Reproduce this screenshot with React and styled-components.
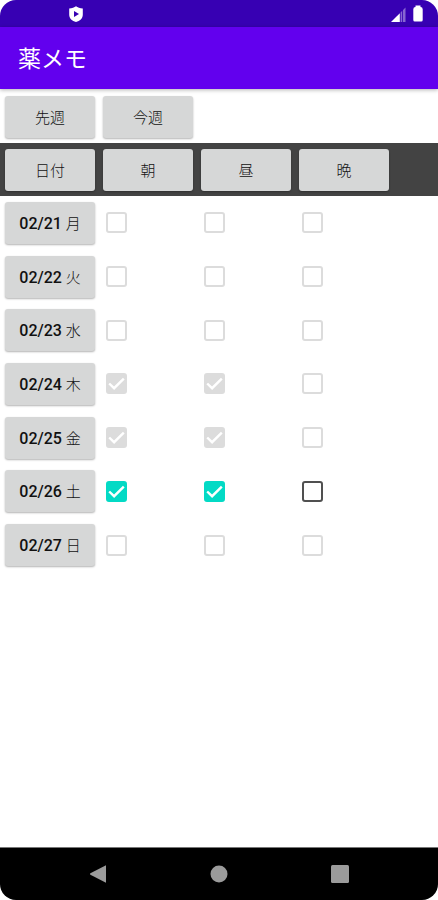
import { useState } from "react";
import styled, { createGlobalStyle } from "styled-components";

const GlobalStyle = createGlobalStyle`
  * {
    box-sizing: border-box;
  }
  body {
    margin: 0;
    background-color: #ffffff;
    font-family: Roboto, "Noto Sans CJK JP", sans-serif;
  }
`;

const Phone = styled.div`
  display: flex;
  flex-direction: column;
  min-height: 100vh;
  border-radius: 16px;
  overflow: hidden;
  background-color: #ffffff;
`;

const StatusBar = styled.div`
  display: flex;
  justify-content: space-between;
  align-items: center;
  height: 27px;
  padding: 0 15px 0 68px;
  background-color: #3700b3;
`;

const StatusIcons = styled.div`
  display: flex;
  align-items: flex-end;
  gap: 7px;
`;

const AppBar = styled.header`
  display: flex;
  align-items: center;
  height: 62px;
  padding: 4px 18px 0;
  background-color: #6200ee;
  color: #ffffff;
  box-shadow: 0 1px 4px rgba(0, 0, 0, 0.3);
`;

const Title = styled.h1`
  margin: 0;
  font-size: 23px;
  line-height: 32px;
  font-weight: 400;
`;

const WeekNav = styled.nav`
  display: flex;
  gap: 8px;
  padding: 7px 5px 5px;
`;

const Button = styled.button`
  display: block;
  width: 90px;
  height: 42px;
  padding: 2px 0 0;
  border: none;
  border-radius: 3px;
  background-color: #d6d7d7;
  box-shadow: 0 1px 2px rgba(0, 0, 0, 0.3);
  color: #111111;
  font-family: inherit;
  font-size: 15px;
  font-weight: 300;
  line-height: 24px;
  white-space: nowrap;
  cursor: pointer;
`;

const DateText = styled.span`
  font-size: 16px;
  font-weight: 500;
`;

const MemoTable = styled.table`
  width: 100%;
  height: 429px;
  table-layout: fixed;
  border-collapse: collapse;
`;

const HeadRow = styled.tr`
  height: 53px;
  background-color: #434343;
`;

const HeadCell = styled.th`
  width: ${(props) => (props.$last ? "auto" : "98px")};
  padding: 0 0 0 5px;
  text-align: left;
`;

const RowHead = styled.th`
  padding: 0 0 0 5px;
  text-align: left;
`;

const Cell = styled.td`
  padding: 0 0 0 8px;
`;

const CheckLabel = styled.label`
  display: grid;
  width: 21px;
  height: 21px;
`;

const CheckInput = styled.input`
  grid-area: 1 / 1;
  appearance: none;
  width: 21px;
  height: 21px;
  margin: 0;
  border: 2px solid #505050;
  border-radius: 3px;
  background-color: #ffffff;

  &:checked {
    border-color: #03dac5;
    background-color: #03dac5;
  }
  &:disabled {
    border-color: #dcdcdc;
  }
  &:disabled:checked {
    background-color: #dcdcdc;
  }
`;

const CheckMark = styled.svg`
  grid-area: 1 / 1;
  width: 21px;
  height: 21px;
  pointer-events: none;
`;

const NavBar = styled.footer`
  display: flex;
  justify-content: center;
  align-items: center;
  gap: 98px;
  height: 53px;
  margin-top: auto;
  border-top: 1px solid #777777;
  background-color: #000000;
`;

const NavButton = styled.button`
  display: flex;
  justify-content: center;
  align-items: center;
  width: 23px;
  height: 24px;
  padding: 0;
  border: none;
  background: none;
  cursor: pointer;
`;

const times = ["朝", "昼", "晩"];

const initialDays = [
  { date: "02/21", day: "月", taken: [false, false, false] },
  { date: "02/22", day: "火", taken: [false, false, false] },
  { date: "02/23", day: "水", taken: [false, false, false] },
  { date: "02/24", day: "木", taken: [true, true, false] },
  { date: "02/25", day: "金", taken: [true, true, false] },
  { date: "02/26", day: "土", taken: [true, true, false], today: true },
  { date: "02/27", day: "日", taken: [false, false, false] },
];

function Check({ label, checked, disabled, onChange }) {
  return (
    <CheckLabel>
      <CheckInput
        type="checkbox"
        aria-label={label}
        checked={checked}
        disabled={disabled}
        onChange={onChange}
      />
      {checked && (
        <CheckMark viewBox="0 0 21 21" aria-hidden="true">
          <path
            d="M3.2 10.5 L8.1 15.2 L17.8 5.6"
            fill="none"
            stroke="#ffffff"
            strokeWidth="2.4"
          />
        </CheckMark>
      )}
    </CheckLabel>
  );
}

export default function App() {
  const [days, setDays] = useState(initialDays);

  const toggle = (date, index) => {
    setDays(
      days.map((d) =>
        d.date === date
          ? { ...d, taken: d.taken.map((t, i) => (i === index ? !t : t)) }
          : d
      )
    );
  };

  return (
    <>
      <GlobalStyle />
      <Phone>
        <StatusBar>
          <svg width="16" height="16" viewBox="0 0 16 16">
            <path
              d="M8 0.3 C9.6 1.5 12 2.3 14.8 2.5 V8.4 C14.8 12.4 11.8 15 8 15.9 C4.2 15 1.2 12.4 1.2 8.4 V2.5 C4 2.3 6.4 1.5 8 0.3 Z"
              fill="#ffffff"
            />
            <path d="M6 5 L11 8 L6 11 Z" fill="#3700b3" />
          </svg>
          <StatusIcons>
            <svg width="15" height="15" viewBox="0 0 15 15">
              <path
                d="M9.6 5.4 L11.2 3.8 V15 H9.6 Z M12 3 L14.5 0.5 V15 H12 Z"
                fill="#ffffff"
                opacity="0.4"
              />
              <path d="M8.8 6.2 V15 H0 Z" fill="#ffffff" />
            </svg>
            <svg width="10" height="17" viewBox="0 0 10 17">
              <path
                d="M2.5 2 V0.5 H7.5 V2 Q9.7 2 9.7 4.2 V15 Q9.7 16.5 8.2 16.5 H1.8 Q0.3 16.5 0.3 15 V4.2 Q0.3 2 2.5 2 Z"
                fill="#ffffff"
              />
            </svg>
          </StatusIcons>
        </StatusBar>
        <AppBar>
          <Title>薬メモ</Title>
        </AppBar>
        <WeekNav>
          <Button>先週</Button>
          <Button>今週</Button>
        </WeekNav>
        <MemoTable>
          <thead>
            <HeadRow>
              <HeadCell>
                <Button>日付</Button>
              </HeadCell>
              {times.map((time, i) => (
                <HeadCell key={time} $last={i === times.length - 1}>
                  <Button>{time}</Button>
                </HeadCell>
              ))}
            </HeadRow>
          </thead>
          <tbody>
            {days.map((d) => (
              <tr key={d.date}>
                <RowHead scope="row">
                  <Button>
                    <DateText>{d.date}</DateText> {d.day}
                  </Button>
                </RowHead>
                {d.taken.map((taken, i) => (
                  <Cell key={times[i]}>
                    <Check
                      label={`${d.date} ${times[i]}`}
                      checked={taken}
                      disabled={!d.today}
                      onChange={() => toggle(d.date, i)}
                    />
                  </Cell>
                ))}
              </tr>
            ))}
          </tbody>
        </MemoTable>
        <NavBar>
          <NavButton aria-label="戻る">
            <svg width="18" height="20" viewBox="0 0 18 20">
              <path
                d="M17 1.2 V18.8 L1.4 10.8 Q0.4 10 1.4 9.2 Z"
                fill="#9b9b9b"
              />
            </svg>
          </NavButton>
          <NavButton aria-label="ホーム">
            <svg width="18" height="18" viewBox="0 0 18 18">
              <circle cx="9" cy="9" r="8.5" fill="#9b9b9b" />
            </svg>
          </NavButton>
          <NavButton aria-label="履歴">
            <svg width="18" height="18" viewBox="0 0 18 18">
              <rect width="18" height="18" rx="1.5" fill="#9b9b9b" />
            </svg>
          </NavButton>
        </NavBar>
      </Phone>
    </>
  );
}
